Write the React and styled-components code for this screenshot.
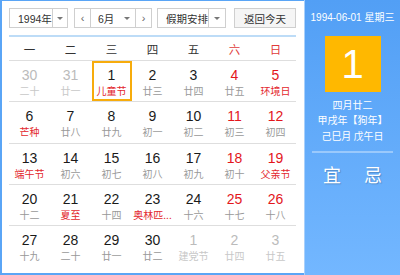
import React from "react";
import styled, { createGlobalStyle } from "styled-components";

const Global = createGlobalStyle`
  html, body { margin: 0; padding: 0; background: #fff; }
  body { font-family: "Liberation Sans", Arial, "Noto Sans CJK SC", sans-serif; }
  * { box-sizing: border-box; }
`;

const Frame = styled.div`
  width: 400px;
  height: 275px;
  display: flex;
  background: #5aa5f6;
  padding: 1px 0 2px 2px;
`;

const Left = styled.div`
  width: 302px;
  background: #fff;
  padding: 7px 7px 0 7px;
  display: flex;
  flex-direction: column;
`;

const Right = styled.div`
  flex: 1;
  margin: -1px 0 -2px 0;
  border-left: 1px solid #a9d0fb;
  background: linear-gradient(#529ff5, #73b7ff);
  display: flex;
  flex-direction: column;
  align-items: center;
  color: #fff;
  font-family: "Liberation Sans", Arial, "Noto Sans CJK SC", sans-serif;
`;

const Toolbar = styled.div`
  display: flex;
  align-items: center;
  height: 20px;
`;

const Box = styled.div`
  display: flex;
  align-items: stretch;
  height: 20px;
  width: ${(p) => p.w}px;
  margin-left: ${(p) => p.ml || 0}px;
  border: 1px solid #cfcfcf;
  background: ${(p) => (p.btn ? "#f5f5f5" : "#fff")};
  font-size: 10.5px;
  color: #333;
  justify-content: ${(p) => (p.btn ? "center" : "flex-start")};
`;

const Label = styled.div`
  flex: 1;
  display: flex;
  align-items: center;
  padding-left: ${(p) => p.pl ?? 8}px;
  white-space: nowrap;
  position: relative;
`;

const Arrow = styled.div`
  width: 17px;
  border-left: 1px solid #cfcfcf;
  display: flex;
  align-items: center;
  justify-content: center;
  &::after {
    content: "";
    border-left: 3px solid transparent;
    border-right: 3px solid transparent;
    border-top: 3px solid #777;
  }
`;

const InlineArrow = styled.span`
  position: absolute;
  right: 5px;
  top: 8px;
  border-left: 3px solid transparent;
  border-right: 3px solid transparent;
  border-top: 3px solid #777;
`;

const Nav = styled.div`
  width: 16px;
  display: flex;
  align-items: center;
  justify-content: center;
  color: #666;
  font-size: 11px;
  ${(p) => (p.side === "l" ? "border-right: 1px solid #cfcfcf;" : "border-left: 1px solid #cfcfcf;")}
`;

const BlueLine = styled.div`
  height: 2px;
  background: #bddcf7;
  margin-top: 7px;
  width: 287px;
`;

const WeekRow = styled.div`
  display: grid;
  grid-template-columns: repeat(7, 41px);
  height: 23px;
  align-items: center;
`;

const WeekDay = styled.div`
  text-align: center;
  font-size: 11.5px;
  color: ${(p) => (p.red ? "#e03b3b" : "#333")};
  font-family: "Noto Sans CJK SC", sans-serif;
`;

const Grid = styled.div`
  display: grid;
  grid-template-columns: repeat(7, 41px);
  grid-auto-rows: 41.3px;
`;

const Cell = styled.div`
  border-top: 1px solid #dedede;
  display: flex;
  justify-content: center;
`;

const Day = styled.div`
  width: 40px;
  height: 40px;
  border: 2px solid ${(p) => (p.sel ? "#f7ac0c" : "transparent")};
  display: flex;
  flex-direction: column;
  align-items: center;
  padding-top: 4px;
`;

const Num = styled.div`
  font-size: 14px;
  line-height: 16px;
  color: ${(p) => (p.dim ? "#bbbbbb" : p.red ? "#e3161c" : "#1a1a1a")};
`;

const Lunar = styled.div`
  margin-top: 1px;
  font-size: 10px;
  line-height: 14px;
  white-space: nowrap;
  font-family: "Noto Sans CJK SC", sans-serif;
  color: ${(p) => (p.dim ? "#c8c8c8" : p.red ? "#e3272d" : "#999")};
`;

const DateLine = styled.div`
  margin-top: 12px;
  font-size: 10px;
  line-height: 12px;
  white-space: nowrap;
`;

const BigDay = styled.div`
  margin-top: 12px;
  width: 56px;
  height: 56px;
  background: #ffb800;
  display: flex;
  align-items: center;
  justify-content: center;
  font-size: 40px;
  color: #fff;
`;

const Info = styled.div`
  margin-top: ${(p) => p.mt}px;
  font-size: 10px;
  line-height: 13px;
  white-space: nowrap;
  font-family: "Noto Sans CJK SC", sans-serif;
`;

const Sep = styled.div`
  margin-top: 9px;
  width: 81px;
  height: 2px;
  background: rgba(255, 255, 255, 0.35);
`;

const YiJi = styled.div`
  margin-top: 8px;
  display: flex;
  gap: 23px;
  font-size: 18px;
  font-family: "Noto Sans CJK SC", sans-serif;
  text-shadow: 1px 1px 1px rgba(0, 0, 0, 0.2);
`;

const days = [
  [30, "二十", "d"], [31, "廿一", "d"], [1, "儿童节", "f", "sel"], [2, "廿三"], [3, "廿四"], [4, "廿五", "w"], [5, "环境日", "wf"],
  [6, "芒种", "f"], [7, "廿八"], [8, "廿九"], [9, "初一"], [10, "初二"], [11, "初三", "w"], [12, "初四", "w"],
  [13, "端午节", "f"], [14, "初六"], [15, "初七"], [16, "初八"], [17, "初九"], [18, "初十", "w"], [19, "父亲节", "wf"],
  [20, "十二"], [21, "夏至", "f"], [22, "十四"], [23, "奥林匹...", "f"], [24, "十六"], [25, "十七", "w"], [26, "十八", "w"],
  [27, "十九"], [28, "二十"], [29, "廿一"], [30, "廿二"], [1, "建党节", "d"], [2, "廿四", "d"], [3, "廿五", "d"],
];

const weeks = ["一", "二", "三", "四", "五", "六", "日"];

export default function App() {
  return (
    <>
      <Global />
      <Frame>
        <Left>
          <Toolbar>
            <Box w={59}>
              <Label pl={8}>1994年</Label>
              <Arrow />
            </Box>
            <Box w={78} ml={6}>
              <Nav side="l">&lsaquo;</Nav>
              <Label pl={7}>
                6月
                <InlineArrow />
              </Label>
              <Nav side="r">&rsaquo;</Nav>
            </Box>
            <Box w={69} ml={5}>
              <Label pl={8}>假期安排</Label>
              <Arrow />
            </Box>
            <Box w={62} ml={8} btn>
              <Label pl={0} style={{ justifyContent: "center" }}>返回今天</Label>
            </Box>
          </Toolbar>
          <BlueLine />
          <WeekRow>
            {weeks.map((w, i) => (
              <WeekDay key={w} red={i >= 5}>{w}</WeekDay>
            ))}
          </WeekRow>
          <Grid>
            {days.map(([n, l, t = "", s], i) => (
              <Cell key={i}>
                <Day sel={s === "sel"}>
                  <Num dim={t === "d"} red={t.includes("w")}>{n}</Num>
                  <Lunar dim={t === "d"} red={t.includes("f")}>{l}</Lunar>
                </Day>
              </Cell>
            ))}
          </Grid>
        </Left>
        <Right>
          <DateLine>1994-06-01 星期三</DateLine>
          <BigDay>1</BigDay>
          <Info mt={6}>四月廿二</Info>
          <Info mt={2}>甲戌年【狗年】</Info>
          <Info mt={3}>己巳月 戊午日</Info>
          <Sep />
          <YiJi>
            <span>宜</span>
            <span>忌</span>
          </YiJi>
        </Right>
      </Frame>
    </>
  );
}
